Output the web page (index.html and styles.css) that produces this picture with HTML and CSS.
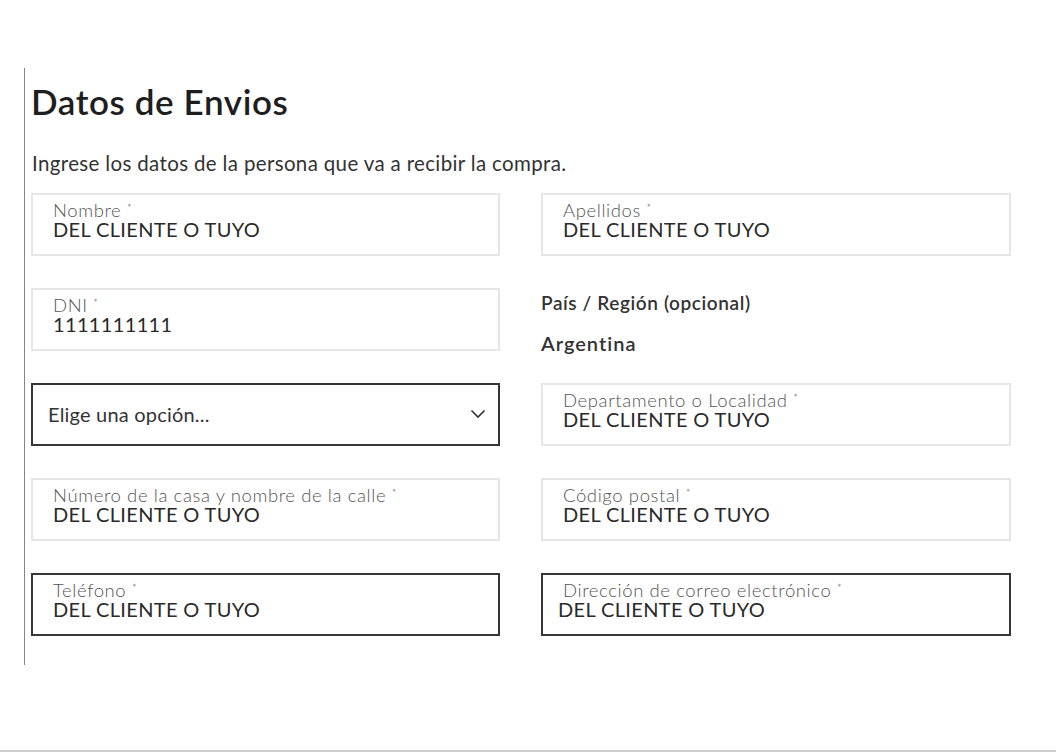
FILE: index.html
```html
<!DOCTYPE html>
<html lang="es">
    <head>
        <meta charset="UTF-8">
        <title>Datos de Envios</title>
        <meta name="viewport" content="width=device-width, initial-scale=1.0">
        <link rel="stylesheet" href="styles.css">
    </head>
    <body>
        <div class="page">
            <div class="panel">
                <h1>Datos de Envios</h1>
                <p class="intro">Ingrese los datos de la persona que va a recibir la compra.</p>

                <div class="fields">
                    <div class="field">
                        <span class="label">Nombre <sup>*</sup></span>
                        <span class="value">DEL CLIENTE O TUYO</span>
                    </div>
                    <div class="field">
                        <span class="label">Apellidos <sup>*</sup></span>
                        <span class="value">DEL CLIENTE O TUYO</span>
                    </div>

                    <div class="field">
                        <span class="label">DNI <sup>*</sup></span>
                        <span class="value">1111111111</span>
                    </div>
                    <div class="country">
                        <span class="country-label">País / Región (opcional)</span>
                        <span class="country-value">Argentina</span>
                    </div>

                    <div class="field select dark">
                        <span class="value">Elige una opción...</span>
                        <svg class="chevron" width="16" height="10" viewBox="0 0 16 10">
                            <path d="M1.5 1.5 L8 8 L14.5 1.5" fill="none" stroke="#333" stroke-width="1.6"/>
                        </svg>
                    </div>
                    <div class="field">
                        <span class="label">Departamento o Localidad <sup>*</sup></span>
                        <span class="value">DEL CLIENTE O TUYO</span>
                    </div>

                    <div class="field">
                        <span class="label">Número de la casa y nombre de la calle <sup>*</sup></span>
                        <span class="value">DEL CLIENTE O TUYO</span>
                    </div>
                    <div class="field">
                        <span class="label">Código postal <sup>*</sup></span>
                        <span class="value">DEL CLIENTE O TUYO</span>
                    </div>

                    <div class="field dark">
                        <span class="label">Teléfono <sup>*</sup></span>
                        <span class="value">DEL CLIENTE O TUYO</span>
                    </div>
                    <div class="field dark email">
                        <span class="label">Dirección de correo electrónico <sup>*</sup></span>
                        <span class="value">DEL CLIENTE O TUYO</span>
                    </div>
                </div>
            </div>
        </div>
    </body>
</html>
```

FILE: styles.css
```css
*{
    box-sizing: border-box;
}
body{
    margin: 0;
    background: #fff;
    color: #222;
    font-family: Lato, "Open Sans", sans-serif;
}

.page{
    min-height: 752px;
    padding: 68px 0 0 24px;
    border-bottom: 2px solid #cfcfcf;
}

.panel{
    height: 597px;
    border-left: 1px solid #858585;
    padding: 13px 0 0 6px;
}

h1{
    margin: 0;
    font-size: 35px;
    font-weight: 600;
    line-height: 40px;
    letter-spacing: .6px;
    color: #1e1e1e;
}
.intro{
    margin: 30px 0 0 1px;
    font-size: 20.5px;
    line-height: 24px;
    letter-spacing: .35px;
    color: #333;
}

/*form grid*/
.fields{
    display: grid;
    grid-template-columns: 469px 470px;
    grid-auto-rows: 63px;
    column-gap: 41px;
    row-gap: 32px;
    margin-top: 18px;
}

.field{
    display: flex;
    flex-direction: column;
    padding: 6px 20px 0 20px;
    border: 2px solid #e6e6e6;
}
.field.dark{
    border-color: #363636;
}
.label{
    font-size: 18.5px;
    font-weight: 300;
    line-height: 18px;
    letter-spacing: .6px;
    color: #555;
    white-space: nowrap;
}
.label sup{
    font-size: 11px;
    vertical-align: 5px;
    line-height: 0;
}
.value{
    font-size: 20px;
    font-weight: 400;
    line-height: 20px;
    letter-spacing: .35px;
    color: #2a2a2a;
}
.email .value{
    margin-left: -5px;
}

.select{
    flex-direction: row;
    align-items: center;
    justify-content: space-between;
    padding: 0 12px 2px 15px;
}
.select .value{
    letter-spacing: .2px;
    color: #333;
}

.country{
    display: flex;
    flex-direction: column;
    padding-top: 5px;
}
.country-label{
    font-size: 19px;
    font-weight: 600;
    line-height: 20px;
    letter-spacing: .6px;
    color: #333;
}
.country-value{
    margin-top: 19px;
    font-size: 20px;
    font-weight: 600;
    line-height: 22px;
    letter-spacing: 1px;
    color: #333;
}
```
